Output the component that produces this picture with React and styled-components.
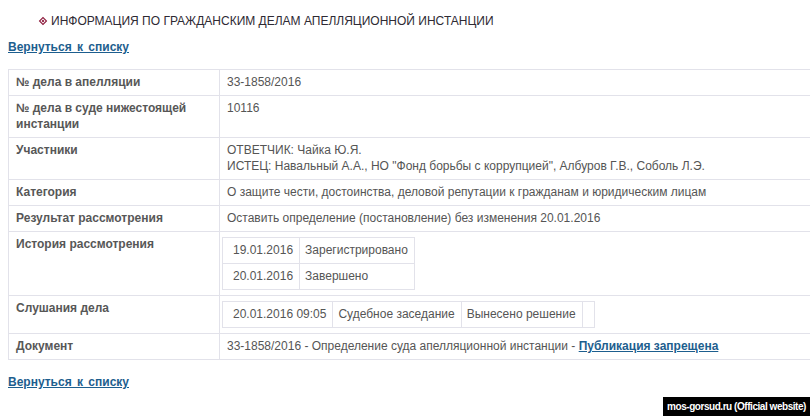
import React from 'react'
import styled, {createGlobalStyle, css} from 'styled-components'

const Global = createGlobalStyle`
	html, body {
		margin: 0;
		padding: 0;
		background: #fff;
		overflow: hidden;
	}
	body {
		font-family: Tahoma, "Liberation Sans", Arial, sans-serif;
		font-size: 12px;
		color: #555;
	}
`

// Page

const Page = styled.div`
	position: relative;
	width: 810px;
	height: 416px;
	padding: 13px 0 0 8px;
	box-sizing: border-box;
`

const Heading = styled.div`
	display: flex;
	align-items: center;
	gap: 5px;
	padding-left: 32px;
	line-height: 16px;
	color: #2e2a33;
	text-transform: uppercase;
`

const Bullet = styled.span`
	width: 4px;
	height: 4px;
	border: 1px solid #8a1538;
	background: #fff;
	transform: rotate(45deg);
	box-shadow: inset 0 0 0 1px #fff, inset 0 0 0 3px #8a1538;
`

const BackLink = styled.a`
	display: inline-block;
	font-weight: bold;
	line-height: 16px;
	color: #1d5e8e;
	text-decoration: underline;
	word-spacing: 2px;
	cursor: pointer;
	margin-top: ${p => p.top}px;
`

// Main table

const Table = styled.table`
	margin-top: 14px;
	width: 820px;
	border-collapse: collapse;
	table-layout: fixed;
`

const Row = styled.tr`
	border: 1px solid #e2e2ea;
`

const Label = styled.td`
	width: 196px;
	padding: 4px 7px 5px;
	line-height: 16px;
	font-weight: bold;
	color: #575757;
	vertical-align: top;
	border: 1px solid #e2e2ea;
`

const Value = styled.td`
	padding: 4px 7px 5px;
	line-height: 16px;
	color: #555;
	vertical-align: top;
	border: 1px solid #e2e2ea;
	${p =>
		p.nested &&
		css`
			padding: 5px 7px 5px 2px;
		`};
`

const Strong = styled.a`
	font-weight: bold;
	color: #1d5e8e;
	text-decoration: underline;
	cursor: pointer;
`

// Nested tables

const SubTable = styled.table`
	border-collapse: collapse;
`

const SubCell = styled.td`
	padding: 4px 6px 5px 5px;
	line-height: 16px;
	white-space: nowrap;
	border: 1px solid #e2e2ea;
	${p =>
		p.first &&
		css`
			padding-left: 10px;
		`};
	${p =>
		p.empty &&
		css`
			width: 1px;
			padding: 4px 5px 5px;
		`};
`

const Watermark = styled.div`
	position: absolute;
	right: 0;
	bottom: 0;
	padding: 3px 4px 3px 4px;
	background: #000;
	color: #fff;
	font-family: "Liberation Sans", Arial, sans-serif;
	font-size: 10px;
	font-weight: bold;
	letter-spacing: -0.45px;
	line-height: 13px;
`

const rows = [
	['№ дела в апелляции', '33-1858/2016'],
	['№ дела в суде нижестоящей инстанции', '10116'],
	[
		'Участники',
		<>
			ОТВЕТЧИК: Чайка Ю.Я.
			<br />
			ИСТЕЦ: Навальный А.А., НО "Фонд борьбы с коррупцией", Албуров Г.В., Соболь Л.Э.
		</>,
	],
	['Категория', 'О защите чести, достоинства, деловой репутации к гражданам и юридическим лицам'],
	['Результат рассмотрения', 'Оставить определение (постановление) без изменения 20.01.2016'],
]

const history = [
	['19.01.2016', 'Зарегистрировано'],
	['20.01.2016', 'Завершено'],
]

export default function App() {
	return (
		<Page>
			<Global />
			<Heading>
				<Bullet />
				Информация по гражданским делам апелляционной инстанции
			</Heading>
			<BackLink top={10}>Вернуться к списку</BackLink>
			<Table>
				<tbody>
					{rows.map(([label, value]) => (
						<Row key={label}>
							<Label>{label}</Label>
							<Value>{value}</Value>
						</Row>
					))}
					<Row>
						<Label>История рассмотрения</Label>
						<Value nested>
							<SubTable>
								<tbody>
									{history.map(([date, state]) => (
										<tr key={date}>
											<SubCell first>{date}</SubCell>
											<SubCell>{state}</SubCell>
										</tr>
									))}
								</tbody>
							</SubTable>
						</Value>
					</Row>
					<Row>
						<Label>Слушания дела</Label>
						<Value nested>
							<SubTable>
								<tbody>
									<tr>
										<SubCell first>20.01.2016 09:05</SubCell>
										<SubCell>Судебное заседание</SubCell>
										<SubCell>Вынесено решение</SubCell>
										<SubCell empty />
									</tr>
								</tbody>
							</SubTable>
						</Value>
					</Row>
					<Row>
						<Label>Документ</Label>
						<Value>
							33-1858/2016 - Определение суда апелляционной инстанции -{' '}
							<Strong>Публикация запрещена</Strong>
						</Value>
					</Row>
				</tbody>
			</Table>
			<BackLink top={14}>Вернуться к списку</BackLink>
			<Watermark>mos-gorsud.ru (Official website)</Watermark>
		</Page>
	)
}
